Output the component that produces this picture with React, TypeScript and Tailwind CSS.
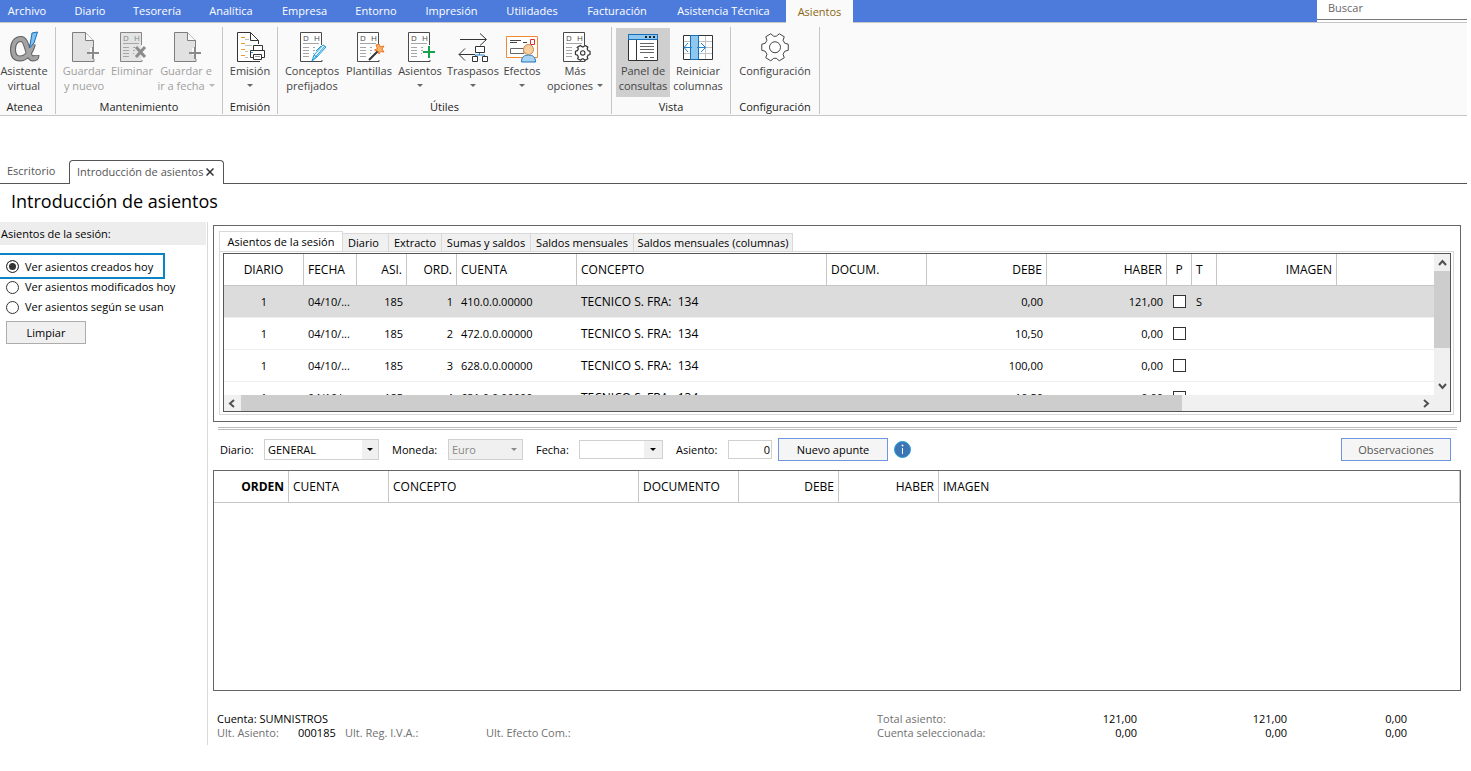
import React, { useState } from 'react'

interface SessionEntry {
    diario: string;
    fecha: string;
    asiento: string;
    orden: number;
    cuenta: string;
    concepto: string;
    debe: string;
    haber: string;
    tipo: string;
}

interface RibbonButtonProps {
    lines: string[];
    width: string;
    icon: React.ReactNode;
    arrow?: boolean;
    disabled?: boolean;
    active?: boolean;
}

interface RibbonGroupProps {
    title: string;
    className: string;
    children: React.ReactNode;
}

const menuItems = [
    { label: "Archivo", width: "w-[60px] pr-[6px]" },
    { label: "Diario", width: "w-[60px]" },
    { label: "Tesorería", width: "w-[74px]" },
    { label: "Analítica", width: "w-[74px]" },
    { label: "Empresa", width: "w-[73px]" },
    { label: "Entorno", width: "w-[70px]" },
    { label: "Impresión", width: "w-[81px]" },
    { label: "Utilidades", width: "w-[80px]" },
    { label: "Facturación", width: "w-[90px]" },
    { label: "Asistencia Técnica", width: "w-[123px]" },
]

const entries: SessionEntry[] = [
    { diario: "1", fecha: "04/10/...", asiento: "185", orden: 1, cuenta: "410.0.0.00000", concepto: "TECNICO S. FRA:  134", debe: "0,00", haber: "121,00", tipo: "S" },
    { diario: "1", fecha: "04/10/...", asiento: "185", orden: 2, cuenta: "472.0.0.00000", concepto: "TECNICO S. FRA:  134", debe: "10,50", haber: "0,00", tipo: "" },
    { diario: "1", fecha: "04/10/...", asiento: "185", orden: 3, cuenta: "628.0.0.00000", concepto: "TECNICO S. FRA:  134", debe: "100,00", haber: "0,00", tipo: "" },
    { diario: "1", fecha: "04/10/...", asiento: "185", orden: 4, cuenta: "631.0.0.00000", concepto: "TECNICO S. FRA:  134", debe: "10,50", haber: "0,00", tipo: "" },
]

const sessionViews = ["Ver asientos creados hoy", "Ver asientos modificados hoy", "Ver asientos según se usan"]

/* ---------- icons ---------- */

const AlphaIcon = () => (
    <svg width="32" height="32" viewBox="0 0 32 32" fill="none">
        <path d="M25 13 C22 23 18 27.500 12 27.500 C7 27.500 5 24 5 18.500 C5 12 8 8 13 8 C20 8 19 27.500 25 27.500 C27.500 27.500 28.500 26 28.500 24" stroke="#5e5e5e" strokeWidth="6" />
        <path d="M25 13 C22 23 18 27.500 12 27.500 C7 27.500 5 24 5 18.500 C5 12 8 8 13 8 C20 8 19 27.500 25 27.500 C27.500 27.500 28.500 26 28.500 24.500" stroke="#a3a3a3" strokeWidth="4" />
        <path d="M24 2 L29.500 1 L26 12 L21.500 17 Z" fill="#7fc0f0" stroke="#1b6eb5" />
    </svg>
)

const NewDocIcon = () => (
    <svg width="32" height="32" viewBox="0 0 32 32" fill="none">
        <path d="M4.500 1.500 H17.500 L25.500 9.500 V17 H22 V24 H25.500 V30.500 H4.500 Z" fill="#e1e1e1" />
        <path d="M25.500 16 V9.500 L17.500 1.500 H4.500 V30.500 H26 V28" stroke="#7d7d7d" />
        <path d="M17.500 1.500 V9.500 H25.500" fill="#fafafa" stroke="#7d7d7d" />
        <path d="M19 22 H31 M25 16 V28" stroke="#8a8a8a" strokeWidth="2" />
    </svg>
)

const LedgerSheet = ({ ink = "#4a4a4a", paper = "#ffffff" }: { ink?: string; paper?: string }) => (
    <>
        <path d="M4.500 1.500 H25.500 V30.500 H4.500 Z" fill={paper} />
        <path d="M25.500 14 V1.500 H4.500 V30.500 H26 V29" stroke={ink} />
        <text x="7" y="10" fontSize="8" fontFamily="Open Sans, sans-serif" fill={ink}>D</text>
        <text x="18" y="10" fontSize="8" fontFamily="Open Sans, sans-serif" fill={ink}>H</text>
        <path d="M7 12.500 H23 M7 16.500 H13 M7 19.500 H13 M7 22.500 H13 M7 25.500 H13 M17 16.500 H19 M17 19.500 H19 M17 22.500 H18" stroke="#a6a6a6" />
    </>
)

const DeleteIcon = () => (
    <svg width="32" height="32" viewBox="0 0 32 32" fill="none">
        <LedgerSheet ink="#858585" paper="#e4e4e4" />
        <path d="M20 16 L29 26 M29 16 L20 26" stroke="#8c8c8c" strokeWidth="3" />
    </svg>
)

const PrintIcon = () => (
    <svg width="32" height="32" viewBox="0 0 32 32" fill="none">
        <path d="M24.500 13 V9.500 L16.500 1.500 H3.500 V30.500 H26" fill="#fff" stroke="#333" />
        <path d="M16.500 1.500 V9.500 H24.500" stroke="#333" />
        <path d="M7 6.500 H11 M7 12.500 H11 M7 18.500 H11 M7 24.500 H11" stroke="#ee9a2e" />
        <path d="M11 8.500 H15 M11 14.500 H18 M11 20.500 H14 M11 26.500 H14" stroke="#bdbdbd" />
        <path d="M19.500 19 V14.500 H28.500 V19" fill="#fff" stroke="#333" />
        <path d="M16.500 19.500 H30.500 V26.500 H16.500 Z" fill="#fff" stroke="#333" />
        <path d="M19.500 23.500 H27.500 V28.500 H19.500 Z" fill="#fff" stroke="#333" />
        <path d="M21 25.500 H26" stroke="#999" />
        <path d="M17 21.500 H19" stroke="#2f96dc" />
    </svg>
)

const ConceptIcon = () => (
    <svg width="32" height="32" viewBox="0 0 32 32" fill="none">
        <LedgerSheet />
        <path d="M16 30 L18 24 L27 14 L30 16 L21 26 Z" fill="#eaf7fe" stroke="#1d9bd8" strokeLinejoin="round" />
        <path d="M16 30 L29 15 M20 20 L25 15 M18 24 L21 26" stroke="#1d9bd8" />
    </svg>
)

const TemplateIcon = () => (
    <svg width="32" height="32" viewBox="0 0 32 32" fill="none">
        <LedgerSheet />
        <path d="M16 29 L25 20" stroke="#333" strokeWidth="2" />
        <path d="M26 13 L27.500 16 L31 15 L29 18 L31 21 L27.500 20.500 L26 23 L25 20 L21.500 19 L24.500 17.500 L23 14 Z" fill="#f9b566" stroke="#e9742a" strokeLinejoin="round" />
    </svg>
)

const AddEntryIcon = () => (
    <svg width="32" height="32" viewBox="0 0 32 32" fill="none">
        <LedgerSheet />
        <path d="M19 21 H31 M25 15 V27" stroke="#14a34a" strokeWidth="2" />
    </svg>
)

const TransferIcon = () => (
    <svg width="32" height="32" viewBox="0 0 32 32" fill="none">
        <path d="M3 8.500 H29 M23 2.500 L29.500 8.500 L23 14.500" stroke="#333" />
        <path d="M18 23.500 H2 M8 17.500 L2 23.500 L8 29.500" stroke="#333" />
        <path d="M22.500 22 V24 M18.500 26 V24 H27.500 V26" stroke="#2582cf" />
        <path d="M18.500 15.500 H27.500 V21.500 H18.500 Z M15.500 25.500 H20.500 V30.500 H15.500 Z M25.500 25.500 H30.500 V30.500 H25.500 Z" fill="#fff" stroke="#333" />
    </svg>
)

const EffectsIcon = () => (
    <svg width="32" height="32" viewBox="0 0 32 32" fill="none">
        <path d="M0.500 5.500 H31.500 V26.500 H0.500 Z" fill="#fff" stroke="#ee8a33" />
        <path d="M4 9.500 H15 M17 11.500 H21 M4 11.500 H11" stroke="#444" />
        <path d="M4.500 17.500 H18 V22.500 H4.500 Z" stroke="#666" />
        <path d="M24.500 8.500 H28.500 V13.500 H24.500 Z" fill="#fff" stroke="#e02f2f" />
        <path d="M15.500 31 C15.500 26 18 24 22.500 24 C27 24 29.500 26 29.500 31 Z" fill="#a9d3f2" stroke="#2272b8" />
        <circle cx="22.500" cy="18.500" r="5" fill="#f7cf9f" stroke="#c48a54" />
    </svg>
)

const gearPath = "M12 2 H18 L19 5.500 L22 7.200 L25.500 6 L28.500 11 L26 14 V16.500 L28.500 19.500 L25.500 24.500 L22 23.300 L19 25 L18 28.500 H12 L11 25 L8 23.300 L4.500 24.500 L1.500 19.500 L4 16.500 V14 L1.500 11 L4.500 6 L8 7.200 L11 5.500 Z"

const MoreIcon = () => (
    <svg width="32" height="32" viewBox="0 0 32 32" fill="none">
        <LedgerSheet />
        <g transform="translate(15.500 13.500) scale(0.550) rotate(90 15 15.250)">
            <path d={gearPath} fill="#fff" stroke="#333" strokeWidth="2.200" strokeLinejoin="round" />
            <circle cx="15" cy="15.250" r="4" stroke="#333" strokeWidth="2" />
        </g>
    </svg>
)

const PanelIcon = () => (
    <svg width="32" height="32" viewBox="0 0 32 32" fill="none">
        <path d="M1.500 3.500 H30.500 V29.500 H1.500 Z" fill="#fff" stroke="#333" />
        <path d="M1.500 3.500 H30.500 V8.500 H1.500 Z" fill="#8cc8ef" stroke="#1b6eb5" />
        <path d="M18 6 H20 M22 6 H24 M26 6 H28" stroke="#222" strokeWidth="2" />
        <path d="M9.500 9 V29" stroke="#333" />
        <path d="M13 12.500 H27 M13 15.500 H27 M13 18.500 H27 M13 21.500 H27 M17 26.500 H21 M23 26.500 H27" stroke="#666" />
    </svg>
)

const ColumnsIcon = () => (
    <svg width="32" height="32" viewBox="0 0 32 32" fill="none">
        <path d="M1.500 4.500 H30.500 V28.500 H1.500 Z" fill="#fff" />
        <path d="M2 10.500 H30 M2 16.500 H30 M2 22.500 H30 M23.500 5 V28" stroke="#c2c2c2" />
        <path d="M1.500 4.500 H30.500 V28.500 H1.500 Z" stroke="#333" />
        <path d="M8.500 4.500 H16.500 V28.500 H8.500 Z" fill="#8cc8ef" stroke="#1b6eb5" />
        <path d="M10 16.500 H2 M6 12 L2 16.500 L6 21 M15 16.500 H23 M19 12 L23.500 16.500 L19 21" stroke="#2582cf" />
    </svg>
)

const GearIcon = () => (
    <svg width="32" height="32" viewBox="0 0 32 32" fill="none">
        <g transform="translate(1 1) rotate(90 15 15.250)">
            <path d={gearPath} fill="#fff" stroke="#444" strokeLinejoin="round" />
            <circle cx="15" cy="15.250" r="5.500" stroke="#444" />
        </g>
    </svg>
)

const Arrow = ({ className = "" }: { className?: string }) => (
    <svg className={className} width="6" height="3" viewBox="0 0 6 3">
        <path d="M0 0 H6 L3 3 Z" fill="currentColor" />
    </svg>
)

const Chevron = ({ d }: { d: string }) => (
    <svg width="9" height="9" viewBox="0 0 9 9" fill="none">
        <path d={d} stroke="#505050" strokeWidth="2" />
    </svg>
)

/* ---------- ribbon ---------- */

const RibbonButton: React.FC<RibbonButtonProps> = ({ lines, width, icon, arrow, disabled, active }) => (
    <button
        type="button"
        disabled={disabled}
        className={`flex h-[69px] shrink-0 flex-col items-center pt-[3px] leading-[15px] whitespace-nowrap ${width} ${disabled ? "text-[#a0a0a0]" : "text-[#444]"} ${active ? "bg-[#cfcfcf]" : ""}`}
    >
        {icon}
        <span>{lines[0]}</span>
        <span className="flex h-[15px] items-center justify-center gap-1">
            {lines[1]}
            {arrow && <Arrow className={disabled ? "text-[#b8b8b8]" : "text-[#666]"} />}
        </span>
    </button>
)

const RibbonGroup: React.FC<RibbonGroupProps> = ({ title, className, children }) => (
    <section className={`flex shrink-0 flex-col border-r border-[#c6c6c6] ${className}`}>
        <div className="flex pt-px">{children}</div>
        <h2 className="pt-[2px] text-center leading-[15px] text-[#222]">{title}</h2>
    </section>
)

const Ribbon = () => (
    <div className="flex border-b border-[#c6c6c6] bg-[#fafafa] pt-1 pb-px">
        <RibbonGroup title="Atenea" className="w-[56px] pr-[6px]">
            <RibbonButton width="w-[48px]" lines={["Asistente", "virtual"]} icon={<AlphaIcon />} />
        </RibbonGroup>
        <RibbonGroup title="Mantenimiento" className="w-[167px]">
            <RibbonButton width="ml-[2px] w-[52px]" lines={["Guardar", "y nuevo"]} icon={<NewDocIcon />} disabled />
            <RibbonButton width="w-[44px]" lines={["Eliminar", ""]} icon={<DeleteIcon />} disabled />
            <RibbonButton width="w-[64px]" lines={["Guardar e", "ir a fecha"]} icon={<NewDocIcon />} arrow disabled />
        </RibbonGroup>
        <RibbonGroup title="Emisión" className="w-[55px]">
            <RibbonButton width="w-[54px]" lines={["Emisión", ""]} icon={<PrintIcon />} arrow />
        </RibbonGroup>
        <RibbonGroup title="Útiles" className="w-[334px]">
            <RibbonButton width="ml-1 w-[60px]" lines={["Conceptos", "prefijados"]} icon={<ConceptIcon />} />
            <RibbonButton width="w-[54px]" lines={["Plantillas", ""]} icon={<TemplateIcon />} />
            <RibbonButton width="w-[48px]" lines={["Asientos", ""]} icon={<AddEntryIcon />} arrow />
            <RibbonButton width="w-[58px]" lines={["Traspasos", ""]} icon={<TransferIcon />} arrow />
            <RibbonButton width="w-[40px]" lines={["Efectos", ""]} icon={<EffectsIcon />} arrow />
            <RibbonButton width="w-[66px]" lines={["Más", "opciones"]} icon={<MoreIcon />} arrow />
        </RibbonGroup>
        <RibbonGroup title="Vista" className="w-[119px]">
            <RibbonButton width="ml-1 w-[54px]" lines={["Panel de", "consultas"]} icon={<PanelIcon />} active />
            <RibbonButton width="w-[56px]" lines={["Reiniciar", "columnas"]} icon={<ColumnsIcon />} />
        </RibbonGroup>
        <RibbonGroup title="Configuración" className="w-[89px]">
            <RibbonButton width="w-[88px]" lines={["Configuración", ""]} icon={<GearIcon />} />
        </RibbonGroup>
    </div>
)

/* ---------- session panel ---------- */

const SessionTable = () => {
    const th = "h-8 border-r border-b border-[#c6c6c6] px-1 text-[12px] font-normal"
    return (
        <table className="w-full table-fixed border-separate border-spacing-0 leading-4 whitespace-pre">
            <colgroup>
                <col className="w-[80px]" />
                <col className="w-[53px]" />
                <col className="w-[50px]" />
                <col className="w-[50px]" />
                <col className="w-[120px]" />
                <col className="w-[250px]" />
                <col className="w-[100px]" />
                <col className="w-[120px]" />
                <col className="w-[120px]" />
                <col className="w-[25px]" />
                <col className="w-[25px]" />
                <col className="w-[120px]" />
                <col />
            </colgroup>
            <thead>
                <tr>
                    <th className={`${th} text-center`}>DIARIO</th>
                    <th className={`${th} text-left`}>FECHA</th>
                    <th className={`${th} text-right`}>ASI.</th>
                    <th className={`${th} text-right`}>ORD.</th>
                    <th className={`${th} text-left`}>CUENTA</th>
                    <th className={`${th} text-left`}>CONCEPTO</th>
                    <th className={`${th} text-left`}>DOCUM.</th>
                    <th className={`${th} text-right`}>DEBE</th>
                    <th className={`${th} text-right`}>HABER</th>
                    <th className={`${th} text-center`}>P</th>
                    <th className={`${th} text-left`}>T</th>
                    <th className={`${th} text-right`}>IMAGEN</th>
                    <th className="border-b border-[#c6c6c6]"></th>
                </tr>
            </thead>
            <tbody>
                {entries.map((entry, i) => (
                    <tr key={entry.orden} className={`*:h-8 *:border-b *:border-[#eee] *:px-1 ${i === 0 ? "bg-[#dcdcdc]" : ""}`}>
                        <td className="text-center">{entry.diario}</td>
                        <td>{entry.fecha}</td>
                        <td className="text-right">{entry.asiento}</td>
                        <td className="text-right">{entry.orden}</td>
                        <td>{entry.cuenta}</td>
                        <td className="text-[12px]">{entry.concepto}</td>
                        <td></td>
                        <td className="text-right">{entry.debe}</td>
                        <td className="text-right">{entry.haber}</td>
                        <td>
                            <input type="checkbox" aria-label={`Punteado ${entry.orden}`} className="mx-auto block size-[13px] appearance-none border border-[#333] bg-white checked:bg-[#333]" />
                        </td>
                        <td>{entry.tipo}</td>
                        <td></td>
                        <td></td>
                    </tr>
                ))}
            </tbody>
        </table>
    )
}

const SessionPanel = () => {
    const tab = "h-[18px] border-t border-r border-[#d9d9d9] bg-[#f0f0f0] leading-[18px] whitespace-nowrap"
    return (
        <section className="border border-[#666] px-[5px] pt-[5px] pb-[6px]">
            <div className="flex items-end">
                <button type="button" className="h-5 w-[124px] border border-b-0 border-[#d9d9d9] text-center leading-[18px] whitespace-nowrap">Asientos de la sesión</button>
                <button type="button" className={`${tab} w-[46px] pr-1`}>Diario</button>
                <button type="button" className={`${tab} w-[53px]`}>Extracto</button>
                <button type="button" className={`${tab} w-[89px]`}>Sumas y saldos</button>
                <button type="button" className={`${tab} w-[103px]`}>Saldos mensuales</button>
                <button type="button" className={`${tab} w-[159px]`}>Saldos mensuales (columnas)</button>
            </div>
            <div className="mr-px border border-[#d9d9d9] pt-px pr-[2px] pb-[2px] pl-[3px]">
                <div className="border border-[#555]">
                    <div className="flex">
                        <div className="h-[141px] min-w-0 flex-1 overflow-hidden">
                            <SessionTable />
                        </div>
                        <div className="flex w-4 flex-col items-center bg-[#f0f0f0]">
                            <div className="flex h-[17px] items-center"><Chevron d="M1 7 L4.500 3 L8 7" /></div>
                            <div className="h-[77px] w-full bg-[#cdcdcd]"></div>
                            <div className="mt-auto flex h-[17px] items-center"><Chevron d="M1 2 L4.500 6 L8 2" /></div>
                        </div>
                    </div>
                    <div className="flex h-4 items-center bg-[#f0f0f0] pr-4">
                        <div className="flex w-[17px] justify-center"><Chevron d="M6 1 L2 4.500 L6 8" /></div>
                        <div className="flex-1">
                            <div className="h-4 w-[80%] bg-[#cdcdcd]"></div>
                        </div>
                        <div className="flex w-[17px] justify-center"><Chevron d="M3 1 L7 4.500 L3 8" /></div>
                    </div>
                </div>
            </div>
        </section>
    )
}

/* ---------- entry form ---------- */

const EntryToolbar = () => {
    const [diario, setDiario] = useState<string>("GENERAL");
    const [fecha, setFecha] = useState<string>("");
    const [asiento, setAsiento] = useState<string>("0");

    return (
        <form className="flex items-center pt-2 pr-[10px] pb-[9px] pl-[7px] whitespace-nowrap" onSubmit={(e) => e.preventDefault()}>
            <label htmlFor="diario" className="w-[44px]">Diario:</label>
            <div className="relative w-[115px]">
                <select
                    id="diario"
                    className="block h-[21px] w-full appearance-none border border-[#d0d0d0] bg-white pl-[3px]"
                    value={diario}
                    onChange={(e) => setDiario(e.target.value)}
                >
                    <option>GENERAL</option>
                </select>
                <span className="pointer-events-none absolute inset-y-px right-px flex w-4 items-center justify-center bg-[#f0f0f0]"><Arrow /></span>
            </div>
            <label htmlFor="moneda" className="ml-[13px] w-[56px]">Moneda:</label>
            <div className="relative w-[75px] text-[#888]">
                <select id="moneda" disabled className="block h-[21px] w-full appearance-none border border-[#d0d0d0] bg-[#f0f0f0] pl-[3px]">
                    <option>Euro</option>
                </select>
                <span className="pointer-events-none absolute inset-y-px right-px flex w-4 items-center justify-center"><Arrow /></span>
            </div>
            <label htmlFor="fecha" className="ml-[13px] w-[43px]">Fecha:</label>
            <div className="flex h-[19px] w-[84px] border border-[#d0d0d0]">
                <input id="fecha" className="min-w-0 flex-1 px-[3px]" type="text" value={fecha} onChange={(e) => setFecha(e.target.value)} />
                <button type="button" aria-label="Abrir calendario" className="flex w-[18px] items-center justify-center bg-[#f0f0f0]"><Arrow /></button>
            </div>
            <label htmlFor="asiento" className="ml-[13px] w-[52px]">Asiento:</label>
            <input
                id="asiento"
                className="h-[19px] w-[44px] border border-[#d0d0d0] px-px text-right"
                type="text"
                value={asiento}
                onChange={(e) => setAsiento(e.target.value)}
            />
            <button type="submit" className="ml-[6px] h-[23px] w-[110px] border border-[#6e95e0] bg-[#f5f5f5]">Nuevo apunte</button>
            <svg className="ml-[6px]" width="17" height="17" viewBox="0 0 17 17">
                <circle cx="8.500" cy="8.500" r="8" fill="#3c74b4" stroke="#2aa0d8" />
                <path d="M8.500 7 V13" stroke="#fff" />
                <circle cx="8.500" cy="4.500" r="1" fill="#fff" />
            </svg>
            <button type="button" className="ml-auto h-[23px] w-[110px] border border-[#6e95e0] bg-[#f5f5f5] text-[#555]">Observaciones</button>
        </form>
    )
}

const EntryTable = () => {
    const th = "h-8 border-r border-b border-[#c6c6c6] px-1 font-normal"
    return (
        <div className="min-h-[221px] border border-[#666]">
            <table className="w-full table-fixed border-separate border-spacing-0 text-[12px] leading-4">
                <colgroup>
                    <col className="w-[75px]" />
                    <col className="w-[100px]" />
                    <col className="w-[250px]" />
                    <col className="w-[100px]" />
                    <col className="w-[100px]" />
                    <col className="w-[100px]" />
                    <col />
                </colgroup>
                <thead>
                    <tr>
                        <th className="h-8 border-r border-b border-[#c6c6c6] px-1 text-right font-bold">ORDEN</th>
                        <th className={`${th} text-left`}>CUENTA</th>
                        <th className={`${th} text-left`}>CONCEPTO</th>
                        <th className={`${th} text-left`}>DOCUMENTO</th>
                        <th className={`${th} text-right`}>DEBE</th>
                        <th className={`${th} text-right`}>HABER</th>
                        <th className={`${th} text-left`}>IMAGEN</th>
                    </tr>
                </thead>
            </table>
        </div>
    )
}

const Totals = () => (
    <footer className="flex pt-[21px] pl-1 leading-[14px] text-[#707070]">
        <div className="flex-1">
            <p className="text-black">Cuenta: SUMNISTROS</p>
            <div className="flex">
                <span className="w-[81px]">Ult. Asiento:</span>
                <span className="w-[47px] text-black">000185</span>
                <span className="w-[141px]">Ult. Reg. I.V.A.:</span>
                <span>Ult. Efecto Com.:</span>
            </div>
        </div>
        <dl className="grid grid-cols-[140px_120px_150px_120px] pr-[54px] text-right">
            <dt className="text-left">Total asiento:</dt>
            <dd className="text-black">121,00</dd>
            <dd className="text-black">121,00</dd>
            <dd className="text-black">0,00</dd>
            <dt className="text-left">Cuenta seleccionada:</dt>
            <dd className="text-black">0,00</dd>
            <dd className="text-black">0,00</dd>
            <dd className="text-black">0,00</dd>
        </dl>
    </footer>
)

const Sidebar = () => {
    const [view, setView] = useState<string>(sessionViews[0]);

    return (
        <aside className="w-[208px] shrink-0 border-r border-[#d9d9d9] pr-px">
            <h2 className="h-[23px] bg-[#ededed] pl-px leading-[23px]">Asientos de la sesión:</h2>
            <fieldset className="flex flex-col items-start pt-2">
                {sessionViews.map((label, i) => (
                    <label
                        key={label}
                        className={i === 0
                            ? "-mb-[2px] flex h-[26px] w-[165px] items-center gap-[6px] border-y-2 border-r-2 border-[#0a84c6] pt-px pl-[6px] whitespace-nowrap"
                            : "flex h-5 items-center gap-[6px] pl-[6px] whitespace-nowrap"}
                    >
                        <input
                            type="radio"
                            name="session-view"
                            className="size-[13px] shrink-0 appearance-none rounded-full border border-[#333] bg-white checked:bg-[#333] checked:shadow-[inset_0_0_0_2px_white]"
                            checked={view === label}
                            onChange={() => setView(label)}
                        />
                        {label}
                    </label>
                ))}
            </fieldset>
            <button type="button" className="mt-1 ml-[6px] h-[23px] w-[80px] border border-[#adadad] bg-[#f0f0f0]">Limpiar</button>
        </aside>
    )
}

export default function App() {
    return (
        <div className="min-w-[1300px] bg-white pr-1 font-['Open_Sans','Noto_Sans',sans-serif] text-[11px] leading-4 text-black">
            <header>
                <nav className="flex h-[23px] border-b border-[#c6c6c6] bg-[#4d7bdc] text-white">
                    {menuItems.map((item) => (
                        <button key={item.label} type="button" className={`h-[22px] shrink-0 text-center whitespace-nowrap ${item.width}`}>{item.label}</button>
                    ))}
                    <button type="button" className="ml-px h-[23px] w-[67px] shrink-0 bg-[#fafafa] text-[#8a6410]">Asientos</button>
                    <div className="ml-auto h-[22px] w-[150px] bg-white">
                        <input type="text" aria-label="Buscar" placeholder="Buscar" className="block h-5 w-full border-b border-[#777] bg-white pb-1 pl-[11px] text-[#666] placeholder:text-[#666]" />
                    </div>
                </nav>
                <Ribbon />
            </header>

            <nav className="mt-11 flex items-end border-b border-[#555] text-[#555]">
                <a href="#escritorio" className="flex h-[23px] w-[69px] items-center pb-[2px] pl-[7px]">Escritorio</a>
                <div className="-mb-px flex h-6 w-[155px] items-center justify-between rounded-t-[4px] border border-b-0 border-[#555] bg-white pr-[9px] pb-[2px] pl-[7px] whitespace-nowrap">
                    <a href="#asientos">Introducción de asientos</a>
                    <button type="button" aria-label="Cerrar">
                        <svg width="8" height="8" viewBox="0 0 8 8">
                            <path d="M0.500 0.500 L7.500 7.500 M7.500 0.500 L0.500 7.500" stroke="#333" strokeWidth="1.500" />
                        </svg>
                    </button>
                </div>
            </nav>

            <h1 className="h-[38px] pl-[11px] text-[18px] leading-[34px]">Introducción de asientos</h1>

            <div className="flex pb-6">
                <Sidebar />
                <main className="min-w-0 flex-1 pt-[3px] pr-[6px] pb-[5px] pl-[5px]">
                    <SessionPanel />
                    <div className="mt-[5px] mr-1 ml-[5px] h-[3px] border-y border-[#bbb]"></div>
                    <EntryToolbar />
                    <EntryTable />
                    <Totals />
                </main>
            </div>
        </div>
    )
}
